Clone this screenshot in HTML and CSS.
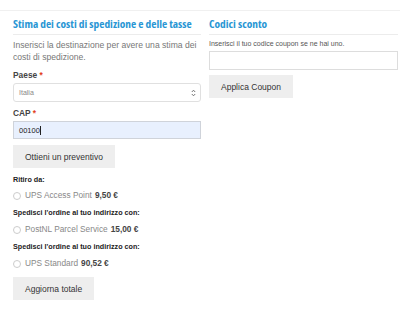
FILE: index.html
```html
<!DOCTYPE html>
<html lang="it">
<head>
<meta charset="utf-8">
<link rel="stylesheet" href="styles.css">
</head>
<body>
<div class="wrap">
  <div class="cols">
    <section class="col">
      <h2 class="title">Stima dei costi di spedizione e delle tasse</h2>
      <p class="intro">Inserisci la destinazione per avere una stima dei costi di spedizione.</p>
      <label class="lbl">Paese <span class="req">*</span></label>
      <div class="select"><span>Italia</span><svg class="arrows" width="5" height="8" viewBox="0 0 5 8"><path d="M0.8 3 L2.5 1.2 L4.2 3 M0.8 5 L2.5 6.8 L4.2 5" fill="none" stroke="#666" stroke-width="0.9"/></svg></div>
      <label class="lbl lbl2">CAP <span class="req">*</span></label>
      <div class="input filled">00100<span class="caret"></span></div>
      <button class="btn">Ottieni un preventivo</button>
      <div class="group">Ritiro da:</div>
      <div class="opt first"><span class="radio"></span>UPS Access Point <b>9,50 €</b></div>
      <div class="group">Spedisci l'ordine al tuo indirizzo con:</div>
      <div class="opt"><span class="radio"></span>PostNL Parcel Service <b>15,00 €</b></div>
      <div class="group">Spedisci l'ordine al tuo indirizzo con:</div>
      <div class="opt"><span class="radio"></span>UPS Standard <b>90,52 €</b></div>
      <button class="btn last">Aggiorna totale</button>
    </section>
    <section class="col">
      <h2 class="title">Codici sconto</h2>
      <p class="small">Inserisci il tuo codice coupon se ne hai uno.</p>
      <div class="input empty"></div>
      <button class="btn coupon">Applica Coupon</button>
    </section>
  </div>
</div>
</body>
</html>
```
FILE: styles.css
```css
html, body { margin: 0; padding: 0; background: #fff; }
body { font-family: "Liberation Sans", Arial, sans-serif; color: #333; }
.wrap { margin-top: 10px; border-top: 1px solid #f0f0f0; }
.cols { display: grid; grid-template-columns: 188px 189px; column-gap: 8px; padding-left: 13px; }
.col { display: flex; flex-direction: column; align-items: flex-start; }
.title {
  font-family: "Open Sans", "DejaVu Sans Condensed", sans-serif;
  font-stretch: 75%;
  font-weight: 700; font-size: 11.4px; color: #2996d4;
  margin: 0; padding: 6px 0 3px; line-height: 14px; white-space: nowrap;
  border-bottom: 1px solid #ececec; align-self: stretch;
}
.intro { margin: 4px 0 0; font-size: 8.6px; line-height: 12px; color: #777; }
.small { margin: 4px 0 0; font-size: 7px; line-height: 9px; color: #555; }
.lbl { font-size: 8.4px; font-weight: bold; color: #444; margin-top: 6px; line-height: 12px; }
.lbl2 { margin-top: 5px; }
.req { color: #e2401c; }
.select {
  align-self: stretch; box-sizing: border-box; height: 19px; margin-top: 2px;
  border: 1px solid #e0e0e0; border-radius: 3px; background: #fff;
  display: flex; align-items: center; justify-content: space-between;
  padding: 0 4px 0 5px; font-size: 7px; color: #888;
}
.input {
  align-self: stretch; box-sizing: border-box; height: 18px; margin-top: 2px;
  border: 1px solid #ddd; display: flex; align-items: center; padding: 0 5px;
  font-size: 7.5px; color: #222;
}
.filled { background: #e8f0fe; border-color: #cfd3da; }
.empty { margin-top: 3px; height: 19px; }
.caret { display: inline-block; width: 1px; height: 9px; background: #222; }
.btn {
  margin-top: 6px; border: 0; background: #eee; color: #333;
  font-family: "Liberation Sans", Arial, sans-serif; font-size: 8.5px;
  height: 23px; padding: 0 12px;
}
.btn.coupon { margin-top: 5px; }
.btn.last { margin-top: 8px; }
.group { font-size: 7.2px; line-height: 10px; font-weight: bold; color: #222; margin-top: 7px; }
.opt { display: flex; align-items: center; font-size: 8.3px; line-height: 12px; color: #888; margin-top: 5px; }
.opt.first { margin-top: 4px; }
.opt b { color: #444; margin-left: 3px; }
.radio {
  width: 6px; height: 6px; border: 1px solid #ccc; border-radius: 50%;
  margin-right: 4px; margin-top: 2px; background: #fff;
}
```
